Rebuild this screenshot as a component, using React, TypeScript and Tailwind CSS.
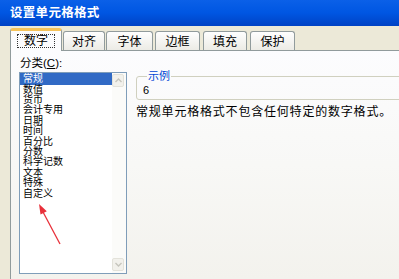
const items = ["常规", "数值", "货币", "会计专用", "日期", "时间", "百分比", "分数", "科学记数", "文本", "特殊", "自定义"];

const tabs = [
  { label: "对齐", cls: "ml-[1px] w-[42px]" },
  { label: "字体", cls: "ml-[1px] w-[47px]" },
  { label: "边框", cls: "ml-[2px] w-[45px]" },
  { label: "填充", cls: "ml-[3px] w-[44px]" },
  { label: "保护", cls: "ml-[3px] w-[45px]" },
];

const Chevron = ({ up }: { up?: boolean }) => (
  <svg width="7" height="5" viewBox="0 0 7 5">
    <path d={up ? "M0.5 4 L3.5 1 L6.5 4" : "M0.5 1 L3.5 4 L6.5 1"} fill="none" stroke="#c6c5bd" strokeWidth="1.4" />
  </svg>
);

const App = (): JSX.Element => {
  return (
    <div className="w-[399px] h-[279px] overflow-hidden bg-[#ece9d8] flex flex-col font-['Liberation_Sans','Noto_Sans_CJK_SC',sans-serif] text-black">
      {/* title bar */}
      <div className="h-[26px] shrink-0 bg-gradient-to-b from-[#0b60e8] via-[#0056e2] to-[#0042c4] flex items-center pl-[10px] text-white font-bold text-[12.5px] tracking-[0.3px]">
        设置单元格格式
      </div>

      {/* tabs */}
      <div className="h-[24px] shrink-0 flex items-end pl-[10px]">
        <div className="relative z-10 -mb-[1px] w-[52px] h-[23px] bg-[#fcfcfe] border-x border-[#919b9c] border-t-[3px] border-t-[#f6c35a] rounded-t-[3px] flex items-center justify-center">
          <span className="border border-dotted border-[#333] h-[14px] w-[38px] flex items-center justify-center text-[12px] leading-none whitespace-nowrap">数字</span>
        </div>
        {tabs.map((t) => (
          <div key={t.label} className={`${t.cls} h-[19px] border-x border-t border-[#919b9c] rounded-t-[3px] bg-gradient-to-b from-[#fefefe] to-[#ecebe5] flex items-center justify-center pt-[2px] text-[12px] leading-none whitespace-nowrap`}>
            {t.label}
          </div>
        ))}
      </div>

      {/* panel */}
      <div className="flex-1 ml-[10px] border-l border-t border-[#919b9c] bg-gradient-to-b from-[#fcfcfe] via-[#f8f8f6] to-[#f3f2ed] flex pt-[6px] pl-[8px]">
        <div className="flex flex-col">
          <div className="text-[11.5px] leading-[13px] pl-[1px]">
            分类(<span className="underline">C</span>):
          </div>
          <div className="relative mt-[2px] w-[108px] h-[202px] border border-[#7f9db9] bg-white flex">
            <div className="flex-1 flex flex-col">
              {items.map((it, i) => (
                <div
                  key={it}
                  className={`flex items-center pl-[3px] text-[10px] leading-none whitespace-nowrap ${i === 0 ? "h-[11.5px] bg-[#316ac5] text-white" : "h-[10.4px]"}`}
                >
                  {it}
                </div>
              ))}
            </div>
            {/* scrollbar */}
            <div className="w-[14px] bg-[#fbfbf9] flex flex-col justify-between py-[1px]">
              <div className="h-[13px] w-[12px] border border-[#e3e2da] rounded-[2px] bg-[#f2f1ec] flex items-center justify-center">
                <Chevron up />
              </div>
              <div className="h-[13px] w-[12px] border border-[#e3e2da] rounded-[2px] bg-[#f2f1ec] flex items-center justify-center mb-[1px]">
                <Chevron />
              </div>
            </div>
            {/* red arrow annotation */}
            <svg className="absolute left-[15px] top-[128px]" width="30" height="46" viewBox="0 0 30 46">
              <line x1="8" y1="11" x2="25" y2="43" stroke="#e8303a" strokeWidth="1.3" />
              <polygon points="4,3 5.5,13.5 11.8,10.2" fill="#e8303a" />
            </svg>
          </div>
        </div>

        <div className="flex flex-col ml-[9px] mt-[13px]">
          <fieldset className="w-[300px] border border-[#d0d0bf] rounded-[3px] pl-[6px] pt-[2px] pb-[2px]">
            <legend className="ml-[4px] px-[1px] text-[11px] leading-[12px] text-[#0046d5]">示例</legend>
            <div className="text-[11px] leading-[13px]">6</div>
          </fieldset>
          <div className="mt-[5px] text-[12px] leading-[14px] tracking-[0.8px] whitespace-nowrap">
            常规单元格格式不包含任何特定的数字格式。
          </div>
        </div>
      </div>
    </div>
  );
};

export default App;
